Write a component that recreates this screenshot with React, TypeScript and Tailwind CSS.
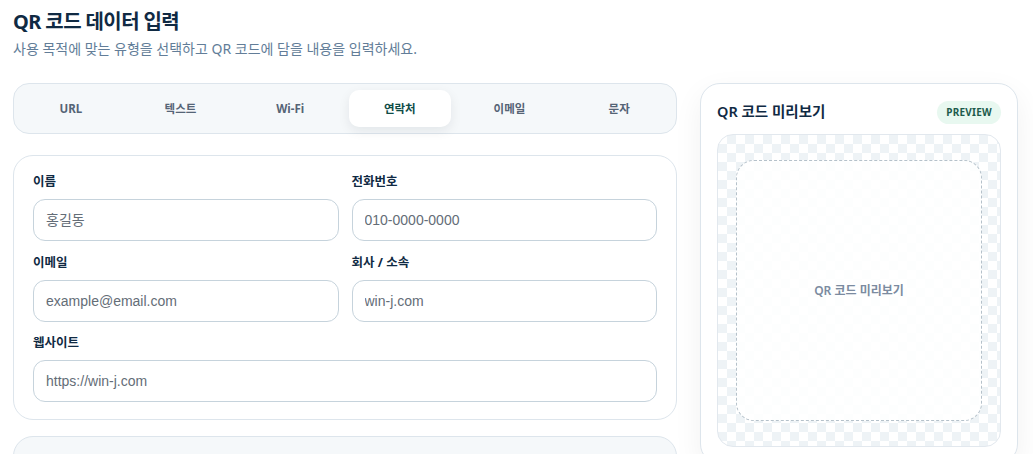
import { useState } from "react";

const TABS: string[] = ["URL", "텍스트", "Wi-Fi", "연락처", "이메일", "문자"];

interface FieldProps {
   label: string;
   placeholder: string;
   wide?: boolean;
}

function Field(props: FieldProps): JSX.Element {
   const { label, placeholder, wide } = props;

   return (
      <div className={wide ? "col-span-2 flex flex-col" : "flex flex-col"}>
         <label className="mb-2 text-[12.5px] leading-[18px] font-bold text-[#102a43]">{label}</label>
         <input
            className="h-[42px] w-full rounded-xl border border-[#c6d3dc] bg-white px-3 text-[14px] text-[#102a43] placeholder:text-[#646d77] outline-none font-['Liberation_Sans','Noto_Sans_CJK_KR',sans-serif]"
            placeholder={placeholder}
         />
      </div>
   );
}

export default function App(): JSX.Element {
   const [active, setActive] = useState<string>("연락처");

   return (
      <div className="min-h-screen bg-white pl-[13px] pr-[15px] pt-2 font-['Noto_Sans','Noto_Sans_CJK_KR',sans-serif]">
         <h1 className="text-[20px] leading-[28px] font-bold tracking-[-0.03em] text-[#102a43]">QR 코드 데이터 입력</h1>
         <p className="mt-1 text-[14px] leading-[18px] text-[#627d98]">
            사용 목적에 맞는 유형을 선택하고 QR 코드에 담을 내용을 입력하세요.
         </p>

         <div className="mt-[25px] flex items-start gap-[23px]">
            {/* Left column */}
            <div className="flex-1 min-w-0">
               <div className="grid grid-cols-6 gap-2 rounded-2xl border border-[#dde5ec] bg-[#f5f8fa] p-1.5">
                  {TABS.map((tab: string) => (
                     <button
                        key={tab}
                        onClick={() => setActive(tab)}
                        className={
                           tab === active
                              ? "h-[37px] rounded-[10px] bg-white text-[11.5px] font-bold text-[#0f4c47] shadow-[0_4px_12px_rgba(15,23,42,0.08)]"
                              : "h-[37px] rounded-[10px] text-[11.5px] font-bold text-[#556476]"
                        }
                     >
                        {tab}
                     </button>
                  ))}
               </div>

               <div className="mt-[21px] rounded-[20px] border border-[#dde5ec] bg-white px-[19px] pt-[17px] pb-[17px]">
                  <div className="grid grid-cols-2 gap-x-[13px] gap-y-[12.5px]">
                     <Field label="이름" placeholder="홍길동" />
                     <Field label="전화번호" placeholder="010-0000-0000" />
                     <Field label="이메일" placeholder="example@email.com" />
                     <Field label="회사 / 소속" placeholder="win-j.com" />
                     <Field label="웹사이트" placeholder="https://win-j.com" wide />
                  </div>
               </div>

               <div className="mt-4 h-[100px] rounded-[20px] border border-[#dde5ec] bg-[#f5f8fa]" />
            </div>

            {/* Right column */}
            <div className="w-[318px] shrink-0 rounded-[20px] border border-[#dde5ec] bg-white px-4 pt-4 pb-4 shadow-[0_10px_30px_rgba(15,23,42,0.06)]">
               <div className="flex h-[24px] items-center justify-between">
                  <h2 className="text-[14.5px] font-semibold text-[#102a43]">QR 코드 미리보기</h2>
                  <span className="flex h-[23px] items-center rounded-full bg-[#e8f8f0] px-[9px] text-[10px] font-bold tracking-wide text-[#1d5b4c]">
                     PREVIEW
                  </span>
               </div>

               <div className="mt-[10px] h-[313px] rounded-2xl border border-[#e2e8ee] bg-[conic-gradient(#eef3f6_25%,#ffffff_0_50%,#eef3f6_0_75%,#ffffff_0)] bg-[length:18px_18px] px-[18px] py-[25px]">
                  <div className="flex h-full items-center justify-center rounded-[18px] border border-dashed border-[#b5c1ca] bg-white/85">
                     <span className="text-[12px] font-semibold text-[#7b8ba0]">QR 코드 미리보기</span>
                  </div>
               </div>
            </div>
         </div>
      </div>
   );
}
